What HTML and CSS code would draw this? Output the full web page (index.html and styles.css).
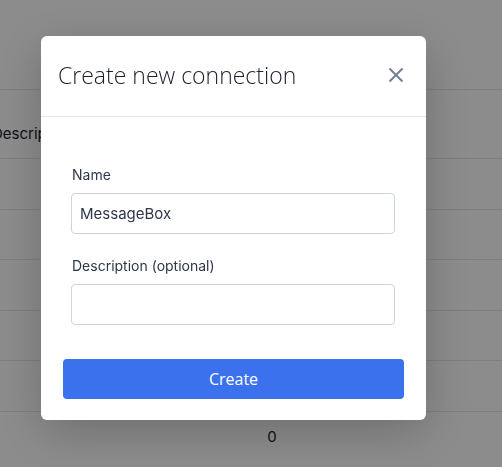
FILE: index.html
```html
<!DOCTYPE html>
<html lang="en">
<head>
    <meta charset="UTF-8">
    <meta name="viewport" content="width=device-width, initial-scale=1.0">
    <title>Connections</title>
    <link rel="stylesheet" href="styles.css">
</head>
<body>

    <div class="page">
        <table class="conn-table">
            <thead>
                <tr>
                    <th class="col-desc">Description</th>
                    <th class="col-count"></th>
                    <th></th>
                </tr>
            </thead>
            <tbody>
                <tr><td></td><td class="col-count">0</td><td></td></tr>
                <tr><td></td><td class="col-count">0</td><td></td></tr>
                <tr><td></td><td class="col-count">0</td><td></td></tr>
                <tr><td></td><td class="col-count">0</td><td></td></tr>
                <tr><td></td><td class="col-count">0</td><td></td></tr>
                <tr><td></td><td class="col-count">0</td><td></td></tr>
            </tbody>
        </table>
    </div>

    <div class="overlay">
        <div class="modal">
            <div class="modal-header">
                <h3 class="modal-title">Create new connection</h3>
                <button class="btn-close" aria-label="Close">
                    <svg width="16" height="16" viewBox="0 0 16 16">
                        <path d="M1.5 1.5 L14.5 14.5 M14.5 1.5 L1.5 14.5" stroke="#718096" stroke-width="2" fill="none"/>
                    </svg>
                </button>
            </div>

            <div class="modal-body">
                <label for="name">Name</label>
                <input type="text" id="name" value="MessageBox">

                <label for="description">Description (optional)</label>
                <input type="text" id="description">
            </div>

            <div class="modal-footer">
                <button class="btn-create">Create</button>
            </div>
        </div>
    </div>

</body>
</html>
```

FILE: styles.css
```css
body {
    margin: 0;
    font-family: Inter, "Noto Sans", sans-serif;
    background: #fff;
    color: #1a202c;
}
.page {
    padding-top: 89px;
}
.conn-table {
    border-collapse: collapse;
    table-layout: fixed;
    margin-left: -24px;
    width: 560px;
}
.conn-table th,
.conn-table td {
    border-top: 1px solid #e2e8f0;
    font-size: 15px;
    font-weight: 400;
    padding: 0 16px;
    height: 50.5px;
    box-sizing: border-box;
}
.conn-table th {
    height: 69px;
    text-align: left;
    vertical-align: bottom;
    padding-bottom: 15px;
}
.col-desc {
    width: 266px;
}
.conn-table .col-count {
    width: 60px;
    padding: 0;
    text-align: center;
}
.overlay {
    position: fixed;
    inset: 0;
    background: rgba(0, 0, 0, 0.45);
    display: flex;
    align-items: flex-start;
    padding: 36px 0 0 41px;
}
.modal {
    width: 385px;
    background: #fff;
    border-radius: 6px;
    box-shadow: 0 12px 48px rgba(0, 0, 0, 0.22);
}
.modal-header {
    height: 80px;
    display: flex;
    align-items: center;
    justify-content: space-between;
    padding: 0 22px 0 17px;
    border-bottom: 1px solid #e2e8f0;
}
.modal-title {
    margin: 0;
    font-family: "Open Sans", sans-serif;
    font-weight: 300;
    font-size: 23px;
    color: #1a202c;
    padding-bottom: 2px;
}
.btn-close {
    background: none;
    border: none;
    padding: 0;
    width: 16px;
    height: 16px;
    cursor: pointer;
    margin-bottom: 3px;
}
.btn-close svg {
    display: block;
}
.modal-body {
    padding: 48px 31px 0 30px;
    display: flex;
    flex-direction: column;
}
.modal-body label {
    font-size: 14px;
    line-height: 20px;
    color: #2d3748;
    padding-left: 1px;
    margin-bottom: 8px;
}
.modal-body input {
    height: 41px;
    box-sizing: border-box;
    border: 1px solid #cbd5e0;
    border-radius: 4px;
    padding: 0 8px;
    font-family: Inter, "Noto Sans", sans-serif;
    font-size: 15px;
    color: #2d3748;
    margin-bottom: 22px;
}
.modal-body input:last-child {
    margin-bottom: 0;
}
.modal-footer {
    padding: 34px 22px 21px;
}
.btn-create {
    width: 100%;
    height: 40px;
    border: none;
    border-radius: 4px;
    background: #3b71ed;
    color: #fff;
    font-family: "Open Sans", sans-serif;
    font-size: 16px;
    cursor: pointer;
}
```
